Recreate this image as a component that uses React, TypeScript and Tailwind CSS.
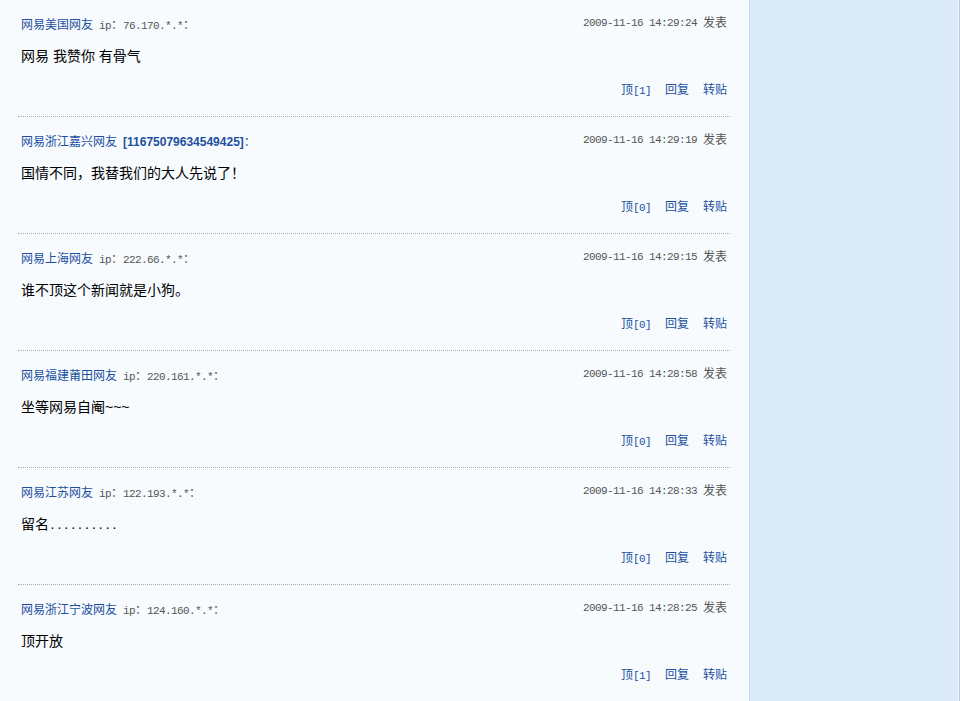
import React from 'react';

interface Comment {
  name: string;
  ip?: string;
  id?: string;
  time: string;
  body: React.ReactNode;
  up: number;
}

const comments: Comment[] = [
  { name: '网易美国网友', ip: '76.170.*.*', time: '2009-11-16 14:29:24', body: '网易 我赞你 有骨气', up: 1 },
  { name: '网易浙江嘉兴网友', id: '11675079634549425', time: '2009-11-16 14:29:19', body: '国情不同，我替我们的大人先说了！', up: 0 },
  { name: '网易上海网友', ip: '222.66.*.*', time: '2009-11-16 14:29:15', body: '谁不顶这个新闻就是小狗。', up: 0 },
  { name: '网易福建莆田网友', ip: '220.161.*.*', time: '2009-11-16 14:28:58', body: '坐等网易自阉~~~', up: 0 },
  {
    name: '网易江苏网友',
    ip: '122.193.*.*',
    time: '2009-11-16 14:28:33',
    body: (
      <>
        留名<span className="font-['Liberation_Mono',monospace] text-[11.5px]">..........</span>
      </>
    ),
    up: 0,
  },
  { name: '网易浙江宁波网友', ip: '124.160.*.*', time: '2009-11-16 14:28:25', body: '顶开放', up: 1 },
];

const cjk = "font-['Liberation_Sans','Noto_Sans_CJK_SC',sans-serif]";
const mono = "font-['Liberation_Mono','Noto_Sans_CJK_SC',monospace] text-[11px] tracking-[-0.6px]";

const CommentItem: React.FC<{ c: Comment; first: boolean }> = ({ c, first }) => (
  <div className={first ? '' : 'border-t border-dotted border-[#ababab]'}>
    <div className="px-[3px]">
      <div className="mt-[17px] flex h-[16px] items-center justify-between">
        <div className="flex items-center text-[12px] leading-[16px]">
          <a className={`${cjk} text-[#1d4f9e]`}>{c.name}</a>
          {c.ip && (
            <span className={`${mono} ml-[6px] text-[#555]`}>
              ip<span className={`${cjk} text-[12px] tracking-normal`}>：</span>
              {c.ip}
              <span className={`${cjk} text-[12px] tracking-normal`}>：</span>
            </span>
          )}
          {c.id && (
            <span className={`${cjk} ml-[6px] font-bold text-[#1d4f9e]`}>
              [{c.id}]<span className="font-normal">：</span>
            </span>
          )}
        </div>
        <div className="-mt-[4px] flex items-center text-[#555]">
          <span className={mono}>{c.time}</span>
          <span className={`${cjk} ml-[6px] text-[12px]`}>发表</span>
        </div>
      </div>
      <div className={`${cjk} mt-[13px] h-[20px] text-[14px] leading-[20px] text-black`}>{c.body}</div>
      <div className="mt-[16px] mb-[18px] flex h-[16px] items-center justify-end gap-[14px] text-[12px] leading-[16px] text-[#1d4f9e]">
        <a className={cjk}>
          顶<span className={mono}>[{c.up}]</span>
        </a>
        <a className={cjk}>回复</a>
        <a className={cjk}>转贴</a>
      </div>
    </div>
  </div>
);

export default function App() {
  return (
    <div className="flex h-[701px] w-[960px] overflow-hidden bg-[#f7fbfe]">
      <div className="w-[749px] shrink-0 pl-[18px] pr-[19px]">
        {comments.map((c, i) => (
          <CommentItem key={i} c={c} first={i === 0} />
        ))}
      </div>
      <div className="w-[1px] shrink-0 bg-[#c9d9e8]" />
      <div className="w-[208px] shrink-0 bg-[#dcebf9]" />
      <div className="w-[1px] shrink-0 bg-[#eef5fc]" />
      <div className="w-[1px] shrink-0 bg-[#bfc6cc]" />
    </div>
  );
}
